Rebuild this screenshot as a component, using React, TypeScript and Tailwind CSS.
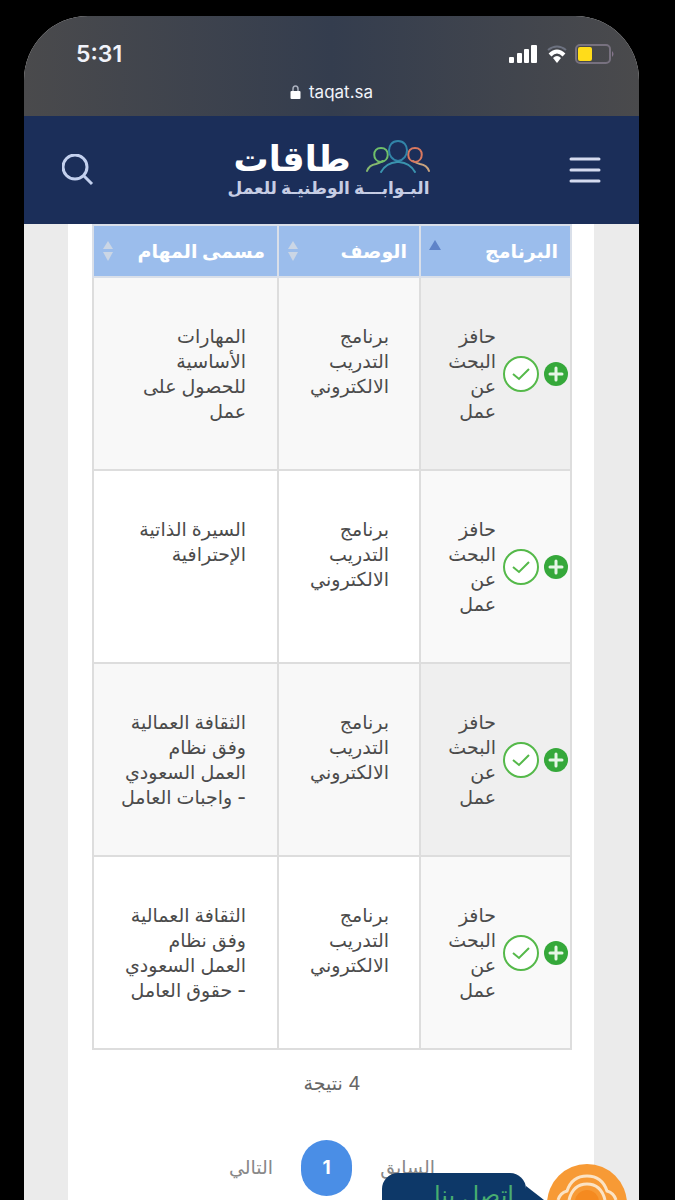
import React from "react";
import { clsx } from "clsx";

const rows = [
  { id: 1, task: "المهارات\nالأساسية\nللحصول على\nعمل" },
  { id: 2, task: "السيرة الذاتية\nالإحترافية" },
  { id: 3, task: "الثقافة العمالية\nوفق نظام\nالعمل السعودي\n- واجبات العامل" },
  { id: 4, task: "الثقافة العمالية\nوفق نظام\nالعمل السعودي\n- حقوق العامل" },
];

const columns = [
  { title: "البرنامج", width: "w-[151px]", sorted: true },
  { title: "الوصف", width: "w-[142px]", sorted: false },
  { title: "مسمى المهام", width: "w-auto", sorted: false },
];

function StatusBar() {
  return (
    <div className="h-[100px] shrink-0 bg-linear-to-r from-[#4a4a4c] via-[#343d4e] to-[#4a4a4c] text-[#f1f3fa]">
      <div className="flex items-center justify-between pt-6 pr-6 pl-[52px]">
        <span className="text-[23px] leading-7 font-semibold">5:31</span>
        <div className="flex items-center gap-2">
          <svg width="30" height="20" viewBox="0 0 30 20" fill="#fff">
            <rect x="0" y="13" width="5" height="6" rx="1" />
            <rect x="8" y="9" width="5" height="10" rx="1" />
            <rect x="15" y="5" width="5" height="14" rx="1" />
            <rect x="22" y="1" width="6" height="18" rx="1" />
          </svg>
          <svg width="20" height="20" viewBox="0 0 20 20" fill="none">
            <path d="M1 6 Q10 -1 19 6" stroke="#6d7280" strokeWidth="2" />
            <path d="M3 11 Q10 4 17 11" stroke="#fff" strokeWidth="4" />
            <path d="M6 14 Q10 10 14 14 L10 19 Z" fill="#fff" />
          </svg>
          <svg width="40" height="20" viewBox="0 0 40 20" fill="none">
            <rect x="1" y="1" width="34" height="18" rx="4" stroke="#77717f" strokeWidth="2" />
            <rect x="3" y="3" width="14" height="14" rx="2" fill="#ffdc1a" />
            <path d="M37 7 Q40 10 37 13 Z" fill="#85758c" />
          </svg>
        </div>
      </div>
      <div className="mt-3 flex items-center justify-center gap-2">
        <svg width="11" height="15" viewBox="0 0 11 15">
          <path d="M3 7 V4 Q3 1 5.5 1 Q8 1 8 4 V7" fill="none" stroke="#aab0bd" strokeWidth="1.5" />
          <rect x="0.5" y="6" width="10" height="8" rx="1" fill="#fff" />
        </svg>
        <span className="text-[17px] leading-6">taqat.sa</span>
      </div>
    </div>
  );
}

function Logo() {
  return (
    <a href="#" dir="rtl" className="flex w-[196px] flex-col text-white">
      <span className="flex items-center justify-between">
        <svg width="64" height="36" viewBox="0 0 64 36" fill="none" strokeWidth="2" strokeLinecap="round">
          <path d="M1 31 Q3 25 10 24 Q13 23 17 21" stroke="#86b86f" />
          <path d="M15 22 C6 21 6 8 15 8 C24 8 24 21 15 22" stroke="#6fbf6a" />
          <path d="M63 31 Q61 25 54 24 Q50 23 47 21" stroke="#c9a37f" />
          <path d="M49 22 C40 21 40 8 49 8 C58 8 58 21 49 22" stroke="#d9785f" />
          <path d="M32 21 C20 19 20 1 32 1 C44 1 44 19 32 21" stroke="#3284a8" />
          <path d="M15 32 Q20 23 31 22 H33 Q44 23 49 32" stroke="#3a93ae" />
        </svg>
        <span className="text-[35px] leading-9 font-bold">طاقات</span>
      </span>
      <span className="text-[17px] leading-6 font-bold whitespace-nowrap text-[#c6cde4]">
        البـوابـــة الوطنيـة للعمل
      </span>
    </a>
  );
}

function SortIcon({ sorted }: { sorted: boolean }) {
  if (sorted) {
    return (
      <svg width="12" height="22" viewBox="0 0 12 22" fill="#5f83c8">
        <path d="M6 0 L12 10 H0 Z" />
      </svg>
    );
  }
  return (
    <svg width="12" height="22" viewBox="0 0 12 22" fill="#cbd6e5">
      <path d="M6 1 L11 9 H1 Z" />
      <path d="M6 21 L11 12 H1 Z" />
    </svg>
  );
}

function ProgramCell() {
  return (
    <div className="flex items-center">
      <button aria-label="عرض التفاصيل" className="shrink-0">
        <svg width="24" height="24" viewBox="0 0 24 24">
          <circle cx="12" cy="12" r="12" fill="#35a83a" />
          <path d="M12 6 V18 M6 12 H18" stroke="#e6f5e6" strokeWidth="3" strokeLinecap="round" />
        </svg>
      </button>
      <svg width="38" height="38" viewBox="0 0 38 38" fill="none" className="mr-1 shrink-0">
        <circle cx="19" cy="19" r="17" fill="#fff" stroke="#55b94a" strokeWidth="2" />
        <path d="M11 19 L17 24 L27 14" stroke="#55b94a" strokeWidth="2" />
      </svg>
      <span className="mr-1.5 whitespace-pre-line">{"حافز\nالبحث\nعن\nعمل"}</span>
    </div>
  );
}

export default function App() {
  return (
    <div className="h-screen overflow-hidden bg-black pt-4 pr-9 pl-6 font-['Inter','DejaVu_Sans',sans-serif]">
      <div className="relative flex h-full flex-col overflow-hidden rounded-t-[64px] bg-[#ebebeb]">
        <StatusBar />
        <header className="flex h-[108px] shrink-0 items-center justify-between bg-[#1b2e59] px-[38px]">
          <button aria-label="بحث">
            <svg width="32" height="32" viewBox="0 0 32 32" fill="none" stroke="#c3d0ee" strokeWidth="3">
              <circle cx="13" cy="13" r="12" />
              <path d="M21 21 L30 30" />
            </svg>
          </button>
          <Logo />
          <button aria-label="القائمة">
            <svg width="32" height="28" viewBox="0 0 32 28" stroke="#d5dbef" strokeWidth="3" strokeLinecap="round">
              <path d="M2 3 H30 M2 14 H30 M2 25 H30" />
            </svg>
          </button>
        </header>

        <main dir="rtl" className="mr-[45px] ml-[44px] flex-1 bg-white pr-[22px] pl-6 text-[#4b4b4b]">
          <table className="w-full table-fixed border-collapse text-[19px] leading-[25px]">
            <thead>
              <tr className="h-[52px] bg-[#9bbdec] text-white">
                {columns.map((col) => (
                  <th key={col.title} className={clsx("border-2 border-[#d9dfe9] pr-3 pl-2", col.width)}>
                    <span className="flex items-center justify-between whitespace-nowrap">
                      {col.title}
                      <SortIcon sorted={col.sorted} />
                    </span>
                  </th>
                ))}
              </tr>
            </thead>
            <tbody>
              {rows.map((row, i) => (
                <tr key={row.id} className={clsx("align-top font-medium", i % 2 === 0 ? "bg-[#f8f8f8]" : "bg-white")}>
                  <td className={clsx("border-2 border-[#dddddd] pt-[46px] pr-0.5 pb-[45px]", i % 2 === 0 ? "bg-[#efefef]" : "bg-[#f9f9f9]")}>
                    <ProgramCell />
                  </td>
                  <td className="border-2 border-[#dddddd] pt-[46px] pr-[30px] pb-[45px] whitespace-pre-line">
                    {"برنامج\nالتدريب\nالالكتروني"}
                  </td>
                  <td className="border-2 border-[#dddddd] pt-[46px] pr-[31px] pb-[45px] whitespace-pre-line">{row.task}</td>
                </tr>
              ))}
            </tbody>
          </table>

          <p className="mt-5 text-center text-[19px] leading-7 text-[#666]">4 نتيجة</p>
          <nav className="mt-[42px] flex items-center justify-center gap-7 text-[19px] text-[#888]">
            <a href="#">السابق</a>
            <button className="h-14 w-[51px] rounded-full bg-[#4a8ee6] font-bold text-white">1</button>
            <a href="#">التالي</a>
          </nav>
        </main>

        {/* floating contact widget */}
        <a href="#" dir="rtl" className="absolute right-3 bottom-0 flex h-9 items-start overflow-hidden">
          <svg width="80" height="36" viewBox="0 0 80 36" fill="none">
            <circle cx="40" cy="40" r="40" fill="#f79a35" />
            <path d="M11 36 Q13 29 20 27 Q25 12 40 12 Q55 12 60 27 Q67 29 69 36" stroke="#fbe3c4" strokeWidth="3" />
            <path d="M22 36 Q26 20 40 20 Q54 20 58 36" stroke="#fbe3c4" strokeWidth="3" />
            <circle cx="40" cy="38" r="12" fill="#f58a20" />
          </svg>
          <svg width="21" height="27" viewBox="0 0 21 27" className="mt-[9px]">
            <path d="M0 13 L18 27 H0 Z" fill="#0d3868" />
          </svg>
          <span className="mt-[9px] h-12 rounded-t-[16px] bg-[#0d3868] pt-1 pr-3 pl-[52px] text-[24px] leading-9 font-medium text-[#48ad70]">
            اتصل بنا
          </span>
        </a>
      </div>
    </div>
  );
}
